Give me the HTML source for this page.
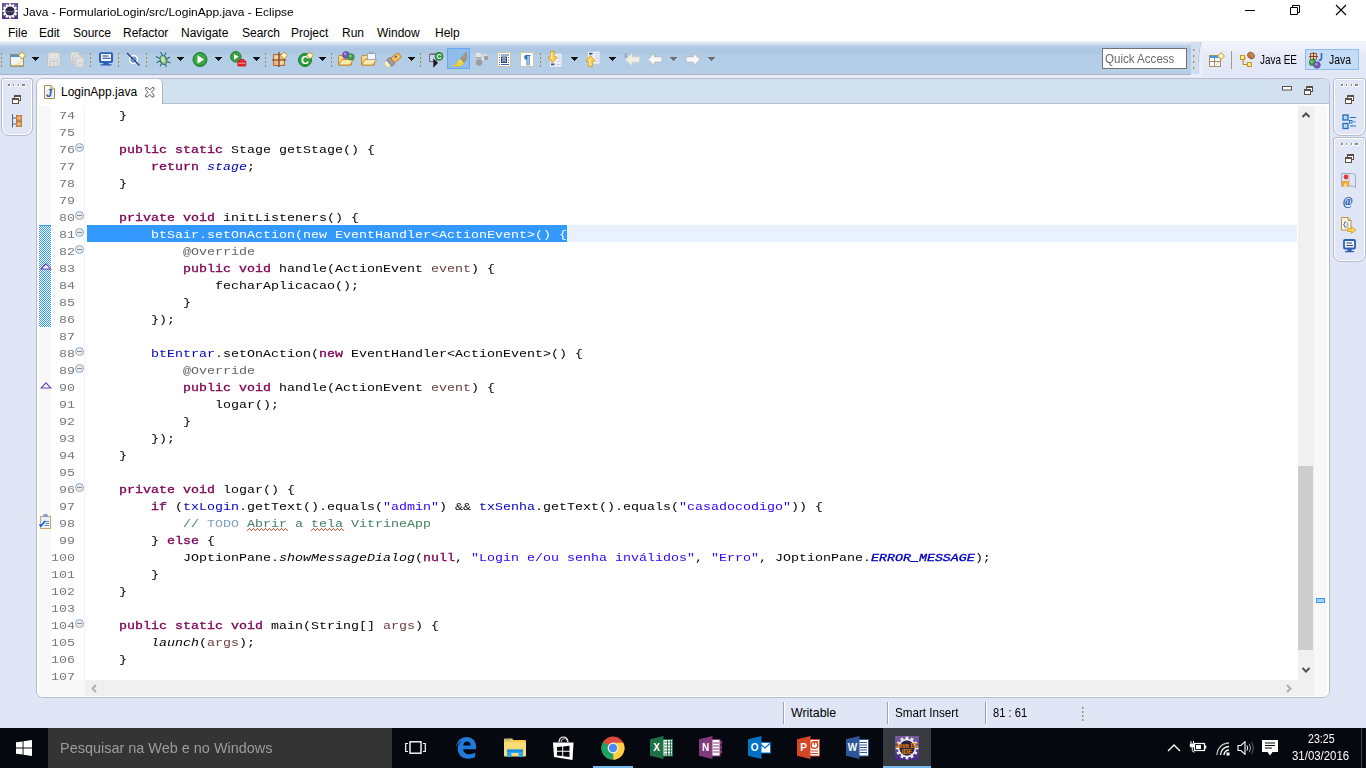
<!DOCTYPE html>
<html lang="pt-BR">
<head>
<meta charset="utf-8">
<title>Java - FormularioLogin/src/LoginApp.java - Eclipse</title>
<style>
*{box-sizing:border-box;margin:0;padding:0}
html,body{width:1366px;height:768px;overflow:hidden}
body{background:#e1e6f6;font-family:"Liberation Sans",sans-serif;font-size:12px;color:#000;position:relative}
.abs{position:absolute}
#titlebar{position:absolute;left:0;top:0;width:1366px;height:23px;background:#fff}
#titlebar .t{position:absolute;left:23px;top:5px;font-size:12px;line-height:15px;white-space:nowrap}
#menubar{position:absolute;left:0;top:23px;width:1366px;height:19px;background:#fff}
#menubar span{position:absolute;top:3px;font-size:12px;line-height:15px;white-space:nowrap}
#toolbar{position:absolute;left:0;top:42px;width:1366px;height:33px;background:linear-gradient(#e9f0f8 0,#d0e0f0 2px,#b2cbe5 5px,#adc8e3 7px,#adc8e3 12px,#b3cde7 13px,#b5cfe9 32px,#adb2c4 32px,#adb2c4 33px)}
#tbline{position:absolute;left:0;top:41px;width:1366px;height:1px;background:#f0f0f0}
#tbsub{position:absolute;left:0;top:75px;width:1366px;height:3px;background:#e9ecf9}
#persp{position:absolute;left:1195px;top:42px;width:171px;height:35px;background:linear-gradient(#f4f6fc,#e6eaf8 40%,#e1e6f6)}
#taskbar{position:absolute;left:0;top:728px;width:1366px;height:40px;background:#05080f}
#search{position:absolute;left:48px;top:0;width:344px;height:40px;background:#343434}
#search span{position:absolute;left:12px;top:0;color:#9c9c9c;font-size:15px;line-height:40px;white-space:nowrap;transform:scaleX(.963);transform-origin:0 0}

#stack{position:absolute;left:36px;top:78px;width:1294px;height:620px;border:1px solid #b6bccc;border-radius:7px;background:#fff;overflow:hidden}
#hdr{position:absolute;left:0;top:0;width:1292px;height:25px;background:#d2e1f0;border-bottom:1px solid #b9c0d2}
#tab{position:absolute;left:0;top:0;width:126px;height:26px;background:#fff;border-right:1px solid #aeb4c8;border-top-right-radius:5px}
#tab .jico{position:absolute;left:7px;top:6px}
#tab .lbl{position:absolute;left:24px;top:6px;font-size:12px;line-height:15px;white-space:nowrap}
#tab .x{position:absolute;left:108px;top:8px}
#ed{position:absolute;left:0;top:25px;width:1292px;height:593px;background:#fff}
#aruler{position:absolute;left:2px;top:2px;width:12px;height:574px;background:#f8f8f8}
#hsl{position:absolute;left:2px;top:576px;width:46px;height:16px;background:#f8f8f8}
#vline{position:absolute;left:47px;top:2px;width:1px;height:574px;background:#f3f3f3}
#code{position:absolute;left:50px;top:2px;width:1210px;height:574px;overflow:hidden;font-family:"Liberation Mono",monospace;font-size:13.333px;line-height:17px;color:#000}
#code .ln{height:17px;padding-top:1px;line-height:17px;white-space:pre}
#code .cur{background:#e8f2fe}
#code .sel{background:#3399ff;color:#fff;display:inline-block;height:17px;margin-top:-1px;padding-top:1px;vertical-align:top}
#code i,#code b{font-family:inherit}
.t{display:inline-block;transform:scaleY(.85);transform-origin:0 12px}
.k{color:#7f0055;font-weight:normal;-webkit-text-stroke:.35px #7f0055}
.f{color:#0000c0}
.fb{-webkit-text-stroke:.4px #0000c0}
.s{color:#2a00ff}
.p{color:#6a3e3e}
.an{color:#646464}
.c{color:#3f7f5f}
.td{color:#7f9fbf}
.sq{text-decoration:underline wavy #e8383d 1px;text-underline-offset:2px}
#nums{position:absolute;left:14px;top:2px;width:24px;height:574px;overflow:hidden;font-family:"Liberation Mono",monospace;font-size:13.333px;line-height:17px;color:#787878;text-align:right}
#nums div{height:17px;padding-top:1px}
.fold{position:absolute;left:38px;width:9px;height:9px;border:1px solid #9aa7b8;border-radius:50%;background:#e3ebf3}
.fold:after{content:"";position:absolute;left:1px;top:3px;width:5px;height:1px;background:#7f8fa3}
#vs{position:absolute;left:1261px;top:2px;width:16px;height:574px;background:#f0f0f0}
#thumb{position:absolute;left:0;top:360px;width:15px;height:184px;background:#cdcdcd}
#ov{position:absolute;left:1277px;top:2px;width:13px;height:590px;background:#f8f8f8}
#mk{position:absolute;left:2px;top:492px;width:9px;height:5px;border:1px solid #3399ff;background:#a9d0f5}
#hs{position:absolute;left:48px;top:576px;width:1229px;height:16px;background:#f0f0f0}

.dd{position:absolute;top:15px;fill:#111;shape-rendering:crispEdges}
.dd.g{fill:#6e6e6e}
.sep{position:absolute;top:11px;width:2px;height:15px;background:linear-gradient(90deg,#9c8a68 0,#9c8a68 1px,#cfc3a8 1px,#cfc3a8 2px) 0 0/2px 4px repeat-y;background-size:2px 4px;-webkit-mask:repeating-linear-gradient(#000 0,#000 2px,transparent 2px,transparent 4px);mask:repeating-linear-gradient(#000 0,#000 2px,transparent 2px,transparent 4px)}
.tsel{position:absolute;background:#8fbce9;border:1px solid #64a8f2}

.ptxt{position:absolute;top:11px;transform-origin:0 0;font-size:12.400px;line-height:15px;white-space:nowrap}
#qa{position:absolute;left:1102px;top:6px;width:85px;height:21px;background:#fff;border:1px solid #727272}
#qa span{position:absolute;left:2px;top:3px;color:#6a6a6a;font-size:12.300px;line-height:15px;white-space:nowrap;transform:scaleX(.94);transform-origin:0 0}

.trim{position:absolute;border:1px solid #b6bccc;border-radius:3px 3px 8px 8px;background:#e1e6f6;box-shadow:inset 0 0 0 1px #fff}
.hd{position:absolute;width:18px;height:3px;background:linear-gradient(90deg,#8f8870 0,#8f8870 2.500px,#fff 2.500px,#fff 3.500px,transparent 3.500px,transparent 5px,#8f8870 5px,#8f8870 6.500px,#fff 6.500px,#fff 7.500px,transparent 7.500px,transparent 10px,#8f8870 10px,#8f8870 11.500px,#fff 11.500px,#fff 12.500px,transparent 12.500px,transparent 14.500px,#8f8870 14.500px,#8f8870 17px,#fff 17px) 0 0/18px 2px no-repeat,linear-gradient(90deg,#fff 0,#fff 3.500px,transparent 3.500px,transparent 5px,#fff 5px,#fff 7.500px,transparent 7.500px,transparent 10px,#fff 10px,#fff 12.500px,transparent 12.500px,transparent 14.500px,#fff 14.500px) 0 2px/18px 1px no-repeat}
.ssep{position:absolute;top:702px;width:2px;height:22px;border-left:1px solid #a0a0a0;border-right:1px solid #fff}
.stx{position:absolute;top:706px;font-size:12.400px;line-height:15px;white-space:nowrap;transform-origin:0 0}

.clk{position:absolute;color:#fff;font-size:12px;line-height:14px;white-space:nowrap;transform-origin:0 0}
#rng{position:absolute;left:2px;top:121px;width:12px;height:102px;border-top:1px solid #3399ff;background:repeating-conic-gradient(#3399ff 0 25%,#fff 0 50%) 0 0/2px 2px}
</style>
</head>
<body>
<div id="titlebar"><!--TITLE-->
<svg class="abs" style="left:2px;top:3px" width="16" height="16" viewBox="0 0 16 16"><defs><linearGradient id="tg" x1="0" y1="0" x2="0" y2="1"><stop offset="0" stop-color="#6a5896"/><stop offset=".55" stop-color="#574088"/><stop offset="1" stop-color="#4c3486"/></linearGradient></defs><rect width="16" height="16" fill="url(#tg)"/><g transform="translate(8 8)" fill="#fff"><circle r="5.900"/><g transform="rotate(0)"><rect x="-1.100" y="-7.500" width="2.200" height="3"/><rect x="-1.100" y="4.500" width="2.200" height="3"/></g><g transform="rotate(30)"><rect x="-1.100" y="-7.500" width="2.200" height="3"/><rect x="-1.100" y="4.500" width="2.200" height="3"/></g><g transform="rotate(60)"><rect x="-1.100" y="-7.500" width="2.200" height="3"/><rect x="-1.100" y="4.500" width="2.200" height="3"/></g><g transform="rotate(90)"><rect x="-1.100" y="-7.500" width="2.200" height="3"/><rect x="-1.100" y="4.500" width="2.200" height="3"/></g><g transform="rotate(120)"><rect x="-1.100" y="-7.500" width="2.200" height="3"/><rect x="-1.100" y="4.500" width="2.200" height="3"/></g><g transform="rotate(150)"><rect x="-1.100" y="-7.500" width="2.200" height="3"/><rect x="-1.100" y="4.500" width="2.200" height="3"/></g></g><circle cx="8" cy="8" r="4.600" fill="#2a2440"/><path d="M3.800 8.500h8.400" stroke="#67628a" stroke-width="1.300"/><path d="M4.300 10h7.400" stroke="#48426c" stroke-width="1"/></svg>
<svg class="abs" style="left:1244px;top:4px" width="12" height="12" viewBox="0 0 12 12"><path d="M1 6.500h10" stroke="#000" stroke-width="1"/></svg>
<svg class="abs" style="left:1289px;top:4px" width="12" height="12" viewBox="0 0 12 12"><path d="M1.500 3.500h7v7h-7zM3.500 3.500v-2h7v7h-2" fill="none" stroke="#000" stroke-width="1"/></svg>
<svg class="abs" style="left:1335px;top:4px" width="12" height="12" viewBox="0 0 12 12"><path d="M1 1l10 10M11 1l-10 10" stroke="#000" stroke-width="1.100"/></svg>

<!--/TITLE--><div class="t">Java - FormularioLogin/src/LoginApp.java - Eclipse</div></div>
<div id="menubar">
<span style="left:8px">File</span><span style="left:39px">Edit</span><span style="left:73px">Source</span><span style="left:123px">Refactor</span><span style="left:181px">Navigate</span><span style="left:242px">Search</span><span style="left:291px">Project</span><span style="left:342px">Run</span><span style="left:377px">Window</span><span style="left:435px">Help</span>
</div>
<div id="tbline"></div><div id="tbsub"></div>
<div id="toolbar"><!--TOOLBAR-->
<div id="qa"><span>Quick Access</span></div>
<div class="tsel" style="left:447px;top:6px;width:23px;height:21px"></div>
<svg class="abs" style="left:10px;top:9px" width="18" height="18" viewBox="0 0 18 18"><rect x=".5" y="3.500" width="13" height="11.500" fill="#eef5fd" stroke="#a39162"/><rect x="1" y="4" width="12" height="2" fill="#3e92dc"/><path d="M3 14.500q8-.5 10-8.500" fill="none" stroke="#f3e3a8" stroke-width="1.600"/><path d="M.5 15h13" stroke="#a08a50"/><path d="M12 1.0l3.500 3.500-3.500 3.500-3.500-3.500z" fill="#f6dc8a" stroke="#cf9f2c" stroke-width="1"/><path d="M12 2.5v4M10 4.5h4" stroke="#fff" stroke-width="1.300"/></svg>
<svg class="abs" style="left:47px;top:9px" width="18" height="18" viewBox="0 0 18 18"><g transform="translate(0 1)"><path d="M.5 1.500q0-1 1-1h11q1 0 1 1v12q0 1-1 1h-11q-1 0-1-1z" fill="#dcdcdc" stroke="#c2c2c2"/><rect x="3" y="1" width="8" height="5.500" fill="#ececec" stroke="#cfcfcf" stroke-width=".6"/><path d="M4.500 2.700h5M4.500 4.300h5" stroke="#cfcfcf" stroke-width=".7"/><rect x="3.500" y="9.500" width="7" height="5" fill="#e6e6e6" stroke="#c4c4c4" stroke-width=".8"/><rect x="6.500" y="10.500" width="1.500" height="3.500" fill="#cfcfcf"/></g></svg>
<svg class="abs" style="left:70px;top:9px" width="18" height="18" viewBox="0 0 18 18"><g transform="translate(0 1)"><g transform="scale(.68)"><path d="M.5 1.500q0-1 1-1h11q1 0 1 1v12q0 1-1 1h-11q-1 0-1-1z" fill="#dcdcdc" stroke="#c2c2c2"/><rect x="3" y="1" width="8" height="5.500" fill="#ececec" stroke="#cfcfcf" stroke-width=".6"/><path d="M4.500 2.700h5M4.500 4.300h5" stroke="#cfcfcf" stroke-width=".7"/><rect x="3.500" y="9.500" width="7" height="5" fill="#e6e6e6" stroke="#c4c4c4" stroke-width=".8"/><rect x="6.500" y="10.500" width="1.500" height="3.500" fill="#cfcfcf"/></g><g transform="translate(2.500 2.500) scale(.68)"><path d="M.5 1.500q0-1 1-1h11q1 0 1 1v12q0 1-1 1h-11q-1 0-1-1z" fill="#dcdcdc" stroke="#c2c2c2"/><rect x="3" y="1" width="8" height="5.500" fill="#ececec" stroke="#cfcfcf" stroke-width=".6"/><path d="M4.500 2.700h5M4.500 4.300h5" stroke="#cfcfcf" stroke-width=".7"/><rect x="3.500" y="9.500" width="7" height="5" fill="#e6e6e6" stroke="#c4c4c4" stroke-width=".8"/><rect x="6.500" y="10.500" width="1.500" height="3.500" fill="#cfcfcf"/></g><g transform="translate(5 5.500) scale(.68)"><path d="M.5 1.500q0-1 1-1h11q1 0 1 1v12q0 1-1 1h-11q-1 0-1-1z" fill="#dcdcdc" stroke="#c2c2c2"/><rect x="3" y="1" width="8" height="5.500" fill="#ececec" stroke="#cfcfcf" stroke-width=".6"/><path d="M4.500 2.700h5M4.500 4.300h5" stroke="#cfcfcf" stroke-width=".7"/><rect x="3.500" y="9.500" width="7" height="5" fill="#e6e6e6" stroke="#c4c4c4" stroke-width=".8"/><rect x="6.500" y="10.500" width="1.500" height="3.500" fill="#cfcfcf"/></g></g></svg>
<svg class="abs" style="left:97px;top:9px" width="18" height="18" viewBox="0 0 18 18"><g transform="translate(0 .3) scale(1 .93)"><rect x="3" y="2" width="12" height="9.500" rx="1" fill="#f4f8fd" stroke="#2c5fb4" stroke-width="2"/><path d="M5.500 5h6M5.500 7.500h8" stroke="#27407e" stroke-width="1.200"/><path d="M7 12.500h4v1.500h-4zM3.500 14.700h11" stroke="#2c5fb4" stroke-width="1.400" fill="#2c5fb4"/></g></svg>
<svg class="abs" style="left:125px;top:9px" width="18" height="18" viewBox="0 0 18 18"><circle cx="8.500" cy="8.500" r="3.900" fill="#4e93cb" stroke="#fff" stroke-width="1.600"/><circle cx="8.500" cy="8.500" r="1.700" fill="#a9cde9"/><path d="M2 2l12.500 12.500" stroke="#2b2f86" stroke-width="1.200"/></svg>
<svg class="abs" style="left:155px;top:9px" width="18" height="18" viewBox="0 0 18 18"><g stroke="#2d6b6b" stroke-width="1.100" fill="none"><path d="M5.500 1l2 3.500M11 1.500l-1.500 3M1 5.500l4 2M15 6l-3.500 2M1.500 11.500l3.500-1.500M15.500 12l-3.500-1.500M5 15.500l1.500-3M11.500 16l-1.500-3.500"/></g><ellipse cx="8.500" cy="9" rx="3.300" ry="4.600" transform="rotate(-18 8.500 9)" fill="#8fc07a" stroke="#2f6f73"/><ellipse cx="8" cy="8.500" rx="1.500" ry="2.800" transform="rotate(-18 8 8.500)" fill="#cfe6bf"/></svg>
<svg class="abs" style="left:192px;top:9px" width="18" height="18" viewBox="0 0 18 18"><circle cx="8" cy="8.500" r="7" fill="#2f9a3c" stroke="#1e7a2c"/><circle cx="8" cy="8" r="5.800" fill="#4cb356" opacity=".55"/><path d="M5.500 4.200l6.500 4.300-6.500 4.300z" fill="#fff"/></svg>
<svg class="abs" style="left:230px;top:9px" width="18" height="18" viewBox="0 0 18 18"><circle cx="5.800" cy="5.800" r="5.300" fill="#3aa044" stroke="#23822f"/><path d="M4 2.900l4.600 2.900-4.600 2.900z" fill="#fff"/><rect x="7.800" y="9.800" width="8" height="5.200" rx=".8" fill="#e8262a" stroke="#c11418" stroke-width=".8"/><path d="M10 9.800v-1.300h3.500v1.300" fill="none" stroke="#d21a1e" stroke-width="1.100"/><path d="M8.200 12.200h7.200" stroke="#f6b0b0" stroke-width=".9"/></svg>
<svg class="abs" style="left:272px;top:9px" width="18" height="18" viewBox="0 0 18 18"><rect x="1.500" y="3.500" width="11" height="11" fill="#e9b882" stroke="#b5683a"/><path d="M7 1v15M0 9h14" stroke="#7a3b22" stroke-width="1.200"/><rect x="2.500" y="4.500" width="3.500" height="3.500" fill="#f3d3a8"/><rect x="8" y="10" width="3.500" height="3.500" fill="#f3d3a8"/><path d="M12 1.0l3.500 3.500-3.500 3.500-3.500-3.500z" fill="#f6dc8a" stroke="#cf9f2c" stroke-width="1"/><path d="M12 2.5v4M10 4.5h4" stroke="#fff" stroke-width="1.300"/></svg>
<svg class="abs" style="left:298px;top:9px" width="18" height="18" viewBox="0 0 18 18"><circle cx="7" cy="9" r="6.500" fill="#2f9a3c" stroke="#1f7d2d"/><text x="7" y="13" font-family="Liberation Sans,sans-serif" font-size="11" font-weight="bold" fill="#fff" text-anchor="middle">C</text><path d="M12 1.0l3.500 3.500-3.500 3.500-3.500-3.500z" fill="#f6dc8a" stroke="#cf9f2c" stroke-width="1"/><path d="M12 2.5v4M10 4.5h4" stroke="#fff" stroke-width="1.300"/></svg>
<svg class="abs" style="left:338px;top:9px" width="18" height="18" viewBox="0 0 18 18"><path d="M.5 5.500q0-1 1-1h4l1.500 1.500h6.500v8h-13z" fill="#f7d98a" stroke="#c98a2c"/><path d="M.5 14l3.500-5.500h11.500l-3.500 5.500z" fill="#fbe9b0" stroke="#c98a2c"/><circle cx="8" cy="4" r="3.500" fill="#7459b0" stroke="#5a3f98" stroke-width=".6"/><circle cx="7.200" cy="3" r="1.300" fill="#a999d6"/><circle cx="13" cy="6" r="3.300" fill="#3f9b50" stroke="#2b7c3a" stroke-width=".6"/><circle cx="12.300" cy="5" r="1.200" fill="#8fd09a"/></svg>
<svg class="abs" style="left:361px;top:9px" width="18" height="18" viewBox="0 0 18 18"><path d="M.5 5.500q0-1 1-1h4l1.500 1.500h6.500v8h-13z" fill="#f7d98a" stroke="#c98a2c"/><path d="M.5 14l3.500-5.500h11.500l-3.500 5.500z" fill="#fbe9b0" stroke="#c98a2c"/><rect x="6.500" y="2.500" width="8" height="6" fill="#f4f6fb" stroke="#9aa7c2"/><path d="M8.500 2.500v-1.500h4v1.500" fill="none" stroke="#9aa7c2"/></svg>
<svg class="abs" style="left:385px;top:9px" width="18" height="18" viewBox="0 0 18 18"><g transform="rotate(-38 8 9)"><path d="M-1 6.500l4-1v7l-4-1z" fill="#fdf6c8" stroke="#e5c255" stroke-width=".6"/><rect x="3" y="5" width="4.500" height="8" fill="#9d9aa6" stroke="#7b7080" stroke-width=".7"/><rect x="7.500" y="6" width="9" height="6" rx="1.500" fill="#f4c060" stroke="#c8791f" stroke-width=".9"/><rect x="11" y="7.500" width="2.500" height="1.200" fill="#2a4fa8"/></g></svg>
<svg class="abs" style="left:428px;top:9px" width="18" height="18" viewBox="0 0 18 18"><rect x="1.500" y="3.500" width="7" height="7" fill="#c6d6ee" stroke="#7d5f9d"/><path d="M2.500 2.500h5" stroke="#b07a8a"/><path d="M5.300 7.300l4.700 4.700-4.700 4.700z" fill="#1a1a1a"/><circle cx="11" cy="5.300" r="3.900" fill="#2f9a3c" stroke="#1f7d2d"/><text x="11" y="8" font-family="Liberation Sans,sans-serif" font-size="7" font-weight="bold" fill="#fff" text-anchor="middle">C</text></svg>
<svg class="abs" style="left:451px;top:9px" width="18" height="18" viewBox="0 0 18 18"><g transform="translate(0 -1)"><path d="M9 9.500l5.500-7.500 1 1v6l-3 4z" fill="#9e9678" stroke="#8a8468" stroke-width=".5"/><path d="M11 7l3.500-4M12 9l3-3.500" stroke="#b8b08c" stroke-width=".7"/><path d="M5 14l4-4.800 3.600 3.500-2.600 3.300h-4z" fill="#f4d43a" stroke="#e2bb1c" stroke-width=".5"/><path d="M1 15.700h6" stroke="#f0cd2a" stroke-width="1.300"/><path d="M7 11.500l2-2 2 2" fill="none" stroke="#fae98c" stroke-width=".9"/></g></svg>
<svg class="abs" style="left:474px;top:9px" width="18" height="18" viewBox="0 0 18 18"><g fill="#9d9d9d"><circle cx="4.500" cy="4.500" r="3" fill="#e4e4e4"/><rect x="2" y="6" width="5" height="1.500" fill="#a8a8a8"/><circle cx="5" cy="11.500" r="3.200"/><circle cx="11" cy="6" r="3" fill="#e0e0e0"/><circle cx="12" cy="7" r="2.300"/><path d="M8 8l2-1.500v3z" fill="#f2f2f2"/></g></svg>
<svg class="abs" style="left:497px;top:9px" width="18" height="18" viewBox="0 0 18 18"><g transform="translate(0 1)"><rect x=".5" y=".5" width="13" height="14" fill="#fdfdf8" stroke="#cfc5a5"/><path d="M2 3h1M2 12.500h1" stroke="#3c62b0" stroke-width="1"/><path d="M4 3h8M4 12.500h8" stroke="#3c62b0" stroke-width="1"/><path d="M2.500 5v6M11.500 5v6" stroke="#3c62b0" stroke-width="1" stroke-dasharray="1 1.500"/><rect x="4.500" y="5" width="5" height="5.500" fill="#dfe8f6" stroke="#27407e"/><path d="M5 7h4M5 9h4" stroke="#27407e"/></g></svg>
<svg class="abs" style="left:520px;top:9px" width="18" height="18" viewBox="0 0 18 18"><g transform="translate(0 1)"><rect x=".5" y=".5" width="13" height="14" fill="#fafcfe" stroke="#cfc5a5"/><text x="7.200" y="12" font-family="Liberation Sans,sans-serif" font-size="12.500" font-weight="bold" fill="#2f6fb6" text-anchor="middle">¶</text></g></svg>
<svg class="abs" style="left:547px;top:9px" width="18" height="18" viewBox="0 0 18 18"><rect x="2.500" y="2.500" width="12.500" height="13.500" fill="#eef2fa" stroke="#c0c8da" stroke-width=".8"/><path d="M9.500 5h4.500M9.500 7.500h4.500M9.500 10h4.500M9 13.500h5" stroke="#c0cadf" stroke-width=".9"/><rect x="4" y="12.500" width="3.500" height="1.800" fill="#2a55a8"/><path d="M3.700 .5h3.600v5.500h2.700l-4.500 5.800-4.500-5.800h2.700z" fill="#fbd560" stroke="#d69a16" stroke-width=".9"/><path d="M4.600 1.300v5.500h-1.800" fill="none" stroke="#fff3c4" stroke-width=".9"/></svg>
<svg class="abs" style="left:585px;top:9px" width="18" height="18" viewBox="0 0 18 18"><rect x="2.500" y=".3" width="12.500" height="12.700" fill="#eef2fa" stroke="#c0c8da" stroke-width=".8"/><path d="M8.500 2.500h5.500M9.500 5h4.500M10 7.500h4M10 10h4" stroke="#c0cadf" stroke-width=".9"/><rect x="4" y="1.800" width="3.500" height="1.800" fill="#2a55a8"/><path d="M3.700 15.700h3.600v-5.500h2.700l-4.500-5.800-4.500 5.800h2.700z" fill="#fbd560" stroke="#d69a16" stroke-width=".9"/><path d="M4.600 14.800v-5.500h-1.800" fill="none" stroke="#fff3c4" stroke-width=".9"/></svg>
<svg class="abs" style="left:623px;top:9px" width="18" height="18" viewBox="0 0 18 18"><path d="M1 8.500l6.500-6.500v3.800h7.500v5.400h-7.500v3.800z" transform="translate(1.500 0)" fill="#f1efe2" stroke="#d2d0c4" stroke-width=".8"/><path d="M1 2.500l3.500 4M4.500 2.500l-3.500 4M2.700 2v5" stroke="#8d9bb0" stroke-width=".7"/></svg>
<svg class="abs" style="left:647px;top:9px" width="18" height="18" viewBox="0 0 18 18"><path d="M1 8.500l6.500-6.500v3.800h7.500v5.400h-7.500v3.800z" fill="#f8f8f8" stroke="#b4b4b4" stroke-width=".9"/></svg>
<svg class="abs" style="left:685px;top:9px" width="18" height="18" viewBox="0 0 18 18"><path d="M1 8.500l6.500-6.500v3.800h7.500v5.400h-7.500v3.800z" transform="translate(16 0) scale(-1 1)" fill="#f8f8f8" stroke="#b4b4b4" stroke-width=".9"/></svg>
<svg class="dd" style="left:32px" width="7" height="4" viewBox="0 0 7 4"><path d="M0 0h7v1h-1v1h-1v1h-1v1h-1v-1h-1v-1h-1v-1h-1z"/></svg>
<svg class="dd" style="left:177px" width="7" height="4" viewBox="0 0 7 4"><path d="M0 0h7v1h-1v1h-1v1h-1v1h-1v-1h-1v-1h-1v-1h-1z"/></svg>
<svg class="dd" style="left:215px" width="7" height="4" viewBox="0 0 7 4"><path d="M0 0h7v1h-1v1h-1v1h-1v1h-1v-1h-1v-1h-1v-1h-1z"/></svg>
<svg class="dd" style="left:253px" width="7" height="4" viewBox="0 0 7 4"><path d="M0 0h7v1h-1v1h-1v1h-1v1h-1v-1h-1v-1h-1v-1h-1z"/></svg>
<svg class="dd" style="left:319px" width="7" height="4" viewBox="0 0 7 4"><path d="M0 0h7v1h-1v1h-1v1h-1v1h-1v-1h-1v-1h-1v-1h-1z"/></svg>
<svg class="dd" style="left:408px" width="7" height="4" viewBox="0 0 7 4"><path d="M0 0h7v1h-1v1h-1v1h-1v1h-1v-1h-1v-1h-1v-1h-1z"/></svg>
<svg class="dd" style="left:571px" width="7" height="4" viewBox="0 0 7 4"><path d="M0 0h7v1h-1v1h-1v1h-1v1h-1v-1h-1v-1h-1v-1h-1z"/></svg>
<svg class="dd" style="left:609px" width="7" height="4" viewBox="0 0 7 4"><path d="M0 0h7v1h-1v1h-1v1h-1v1h-1v-1h-1v-1h-1v-1h-1z"/></svg>
<svg class="dd g" style="left:670px" width="7" height="4" viewBox="0 0 7 4"><path d="M0 0h7v1h-1v1h-1v1h-1v1h-1v-1h-1v-1h-1v-1h-1z"/></svg>
<svg class="dd g" style="left:708px" width="7" height="4" viewBox="0 0 7 4"><path d="M0 0h7v1h-1v1h-1v1h-1v1h-1v-1h-1v-1h-1v-1h-1z"/></svg>
<i class="sep" style="left:1px"></i>
<i class="sep" style="left:90px"></i>
<i class="sep" style="left:118px"></i>
<i class="sep" style="left:146px"></i>
<i class="sep" style="left:265px"></i>
<i class="sep" style="left:331px"></i>
<i class="sep" style="left:420px"></i>
<i class="sep" style="left:540px"></i>
<!--/TOOLBAR--></div>
<div id="persp"><!--PERSP-->
<svg class="abs" style="left:-4px;top:0" width="12" height="35" viewBox="0 0 12 35"><path d="M0 0h12v35h-12z" fill="#e9edf9"/><path d="M0 0h1v32h-1z" fill="#c6d9ee"/><path d="M9.500 0q-2.500 14-2.500 32" fill="none" stroke="#b3c3dc" stroke-width="1"/><path d="M8.500 0q-2.500 14-2.500 32l-6 0v-32z" fill="#cfdff0"/></svg>
<i class="sep" style="left:-2px;top:7px;height:22px;background-size:2px 6px;-webkit-mask:repeating-linear-gradient(#000 0,#000 2px,transparent 2px,transparent 6px);mask:repeating-linear-gradient(#000 0,#000 2px,transparent 2px,transparent 6px)"></i>
<svg class="abs" style="left:14px;top:10px" width="17" height="17" viewBox="0 0 17 17"><rect x=".5" y="3.500" width="11" height="11" fill="#f4f7fc" stroke="#a39162"/><rect x="1" y="4" width="10" height="2" fill="#4a98dd"/><path d="M1 9.500h10M5.500 6v8" stroke="#a39162"/><path d="M7 13l3-3" stroke="#e8d28a"/><path d="M12 .5l3.500 3.500-3.500 3.500-3.500-3.500z" fill="#f6dc8a" stroke="#cf9f2c"/><path d="M12 2v4M10 4h4" stroke="#fff" stroke-width="1.300"/></svg>
<div class="abs" style="left:36px;top:9px;width:1px;height:18px;background:#9a9a9a"></div>
<svg class="abs" style="left:45px;top:9px" width="17" height="17" viewBox="0 0 17 17"><path d="M3 7.500v6h6.500M3 7h3" stroke="#b8860b" fill="none"/><rect x=".5" y="4.500" width="4" height="4" fill="#fde79a" stroke="#c99a1a"/><rect x="7.500" y="11.500" width="4" height="4" fill="#fde79a" stroke="#c99a1a"/><ellipse cx="11" cy="4.500" rx="3.700" ry="3" transform="rotate(35 11 4.500)" fill="#b4723a" stroke="#8a4f22" stroke-width=".7"/><path d="M8.500 3l5 3.200M9.500 1.800l4.600 3" stroke="#e0a070" stroke-width=".7"/></svg>
<span class="ptxt" style="left:65px;transform:scaleX(.8)">Java EE</span>
<div class="abs" style="left:110px;top:7px;width:54px;height:21px;background:#c4dcf6;border:1px solid #8fbdf0"></div>
<svg class="abs" style="left:113px;top:10px" width="17" height="17" viewBox="0 0 17 17"><rect x="2.500" y="1.500" width="6" height="6" fill="#f0c9a0" stroke="#8a4a2a" stroke-width=".8"/><path d="M5.500 0v8.500M1 4.500h9" stroke="#7a3b22" stroke-width=".9"/><path d="M13.500 1v5q0 2.500-3 2.500" fill="none" stroke="#3a62b4" stroke-width="1.600"/><circle cx="4.500" cy="10.500" r="3.300" fill="#3f9b50" stroke="#2b7c3a" stroke-width=".6"/><circle cx="3.800" cy="9.600" r="1.200" fill="#8fd09a"/><circle cx="9" cy="13" r="3.300" fill="#7459b0" stroke="#5a3f98" stroke-width=".6"/><circle cx="8.300" cy="12.200" r="1.200" fill="#a999d6"/></svg>
<span class="ptxt" style="left:134px;transform:scaleX(.84)">Java</span>

<!--/PERSP--></div>
<!--TRIMS-->
<div class="trim" style="left:1px;top:78px;width:32px;height:58px">
<i class="hd" style="left:6px;top:5px"></i>
<svg class="abs" style="left:10px;top:16px" width="10" height="10" viewBox="0 0 10 10"><rect x="2.500" y=".500" width="6" height="5" fill="#fff" stroke="#5b5047"/><path d="M2.500 1.500h6" stroke="#5b5047"/><rect x=".500" y="3.500" width="6" height="5" fill="#fff" stroke="#5b5047"/><path d="M.500 4.500h6" stroke="#5b5047"/></svg>
<svg class="abs" style="left:10px;top:35px" width="11" height="14" viewBox="0 0 11 14"><path d="M.5 0v13.500M.5 4h4M.5 10h4" stroke="#5a6478" stroke-width="1" fill="none"/><rect x="4.500" y="1.500" width="5" height="5" fill="#d98c3a" stroke="#b5682a" stroke-width=".8"/><rect x="4.500" y="7.500" width="5" height="5" fill="#d98c3a" stroke="#b5682a" stroke-width=".8"/><path d="M7 1.500v5M4.500 4h5M7 7.500v5M4.500 10h5" stroke="#f6d9b0" stroke-width=".7"/></svg>
</div>
<div class="trim" style="left:1333px;top:78px;width:33px;height:58px">
<i class="hd" style="left:7px;top:5px"></i>
<svg class="abs" style="left:11px;top:16px" width="10" height="10" viewBox="0 0 10 10"><rect x="2.500" y=".500" width="6" height="5" fill="#fff" stroke="#5b5047"/><path d="M2.500 1.500h6" stroke="#5b5047"/><rect x=".500" y="3.500" width="6" height="5" fill="#fff" stroke="#5b5047"/><path d="M.500 4.500h6" stroke="#5b5047"/></svg>
<svg class="abs" style="left:8px;top:35px" width="15" height="16" viewBox="0 0 15 16"><rect x="1" y="1" width="5" height="5" fill="#bcd8f4" stroke="#1f6fbd" stroke-width="1.300"/><rect x="1" y="9.500" width="5" height="5" fill="#bcd8f4" stroke="#1f6fbd" stroke-width="1.300"/><path d="M8 3.500h6M8 12h6M11.500 7.800h2" stroke="#1f6fbd" stroke-width="1.100"/><rect x="7.500" y="6.500" width="2.500" height="2.500" fill="#fff" stroke="#1f6fbd"/></svg>
</div>
<div class="trim" style="left:1333px;top:137px;width:33px;height:125px">
<i class="hd" style="left:7px;top:5px"></i>
<svg class="abs" style="left:11px;top:16px" width="10" height="10" viewBox="0 0 10 10"><rect x="2.500" y=".500" width="6" height="5" fill="#fff" stroke="#5b5047"/><path d="M2.500 1.500h6" stroke="#5b5047"/><rect x=".500" y="3.500" width="6" height="5" fill="#fff" stroke="#5b5047"/><path d="M.500 4.500h6" stroke="#5b5047"/></svg>
<svg class="abs" style="left:7px;top:34px" width="16" height="17" viewBox="0 0 16 17"><path d="M.5 1.500h11l3 1.500v12.500l-3-1.500h-11z" fill="#dfe6f2" stroke="#8f9db8" stroke-width=".8"/><path d="M8 1.500v13" stroke="#b0bbd0" stroke-width=".8"/><circle cx="5" cy="5" r="2.400" fill="#e23a3a"/><rect x="1" y="9" width="7" height="5.500" fill="#f5a33a"/><path d="M3 14.500v-2.500q1.500-2 3 0v2.500z" fill="#fbe08a"/></svg>
<span class="abs" style="left:9px;top:57px;font:italic bold 11.500px/13px &quot;Liberation Serif&quot;,serif;color:#2a63b8">@</span>
<svg class="abs" style="left:7px;top:79px" width="16" height="17" viewBox="0 0 16 17"><path d="M.5.500h6.500l3 3v9.500h-9.500z" fill="#fdf8e6" stroke="#b5893a" stroke-width=".9"/><path d="M7 .500v3h3" fill="none" stroke="#b5893a" stroke-width=".9"/><path d="M5 4.500q-1.500 0-1.500 1.500t-1 1.500q1 0 1 1.500t1.500 1.500" fill="none" stroke="#3c5a9a" stroke-width=".9"/><path d="M5.500 6h2M5.500 8h2M5.500 10h2" stroke="#3c5a9a" stroke-width=".8"/><path d="M6.500 11.500h4v-2l4.500 3.500-4.500 3.500v-2h-4z" fill="#fbd560" stroke="#d69a16" stroke-width=".8"/></svg>
<svg class="abs" style="left:9px;top:101px" width="14" height="14" viewBox="0 0 14 14"><rect x="1" y="1" width="11" height="8.500" rx="1" fill="#f4f8fd" stroke="#2c5fb4" stroke-width="1.800"/><path d="M3.500 4h5.500M3.500 6.500h6.500" stroke="#27407e" stroke-width="1.100"/><path d="M5 10.500h3v1.500h-3zM2 12.700h9" stroke="#2c5fb4" stroke-width="1.300" fill="#2c5fb4"/></svg>
</div>
<!--/TRIMS-->
<!--EDITOR--><div id="stack">
<div id="hdr"></div>
<div id="tab"><svg class="jico" width="11" height="14" viewBox="0 0 11 14"><path d="M.5.5h6.500l3.500 3.500v9.500h-10z" fill="#fff" stroke="#a38a4c"/><path d="M7 .5v3.500h3.500" fill="#f5ecd0" stroke="#a38a4c"/><rect x="1.500" y="4.500" width="8" height="8" fill="#e4ecf8"/><text x="5" y="11.500" font-family="Liberation Sans,sans-serif" font-size="10.500" font-weight="bold" font-style="italic" fill="#2b5a9c" text-anchor="middle">J</text></svg><span class="lbl">LoginApp.java</span><svg class="x" width="10.500" height="10.500" viewBox="0 0 11 11"><path d="M.7.700h2l2.300 2.500 2.300-2.500h2v2l-2.500 2.800 2.500 2.800v2h-2l-2.300-2.500-2.300 2.500h-2v-2l2.500-2.800-2.500-2.800z" fill="#fff" stroke="#555" stroke-width="1"/></svg></div>
<div id="ed">
<div id="aruler"></div>
<div id="vline"></div>
<div id="code">
<div class="ln"><span class="t">    }</span></div>
<div class="ln"><span class="t"></span></div>
<div class="ln"><span class="t">    <b class="k">public</b> <b class="k">static</b> Stage getStage() {</span></div>
<div class="ln"><span class="t">        <b class="k">return</b> <i class="f">stage</i>;</span></div>
<div class="ln"><span class="t">    }</span></div>
<div class="ln"><span class="t"></span></div>
<div class="ln"><span class="t">    <b class="k">private</b> <b class="k">void</b> initListeners() {</span></div>
<div class="ln cur"><span class="sel"><span class="t">        btSair.setOnAction(new EventHandler&lt;ActionEvent&gt;() {</span></span></div>
<div class="ln"><span class="t">            <span class="an">@Override</span></span></div>
<div class="ln"><span class="t">            <b class="k">public</b> <b class="k">void</b> handle(ActionEvent <span class="p">event</span>) {</span></div>
<div class="ln"><span class="t">                fecharAplicacao();</span></div>
<div class="ln"><span class="t">            }</span></div>
<div class="ln"><span class="t">        });</span></div>
<div class="ln"><span class="t"></span></div>
<div class="ln"><span class="t">        <span class="f">btEntrar</span>.setOnAction(<b class="k">new</b> EventHandler&lt;ActionEvent&gt;() {</span></div>
<div class="ln"><span class="t">            <span class="an">@Override</span></span></div>
<div class="ln"><span class="t">            <b class="k">public</b> <b class="k">void</b> handle(ActionEvent <span class="p">event</span>) {</span></div>
<div class="ln"><span class="t">                logar();</span></div>
<div class="ln"><span class="t">            }</span></div>
<div class="ln"><span class="t">        });</span></div>
<div class="ln"><span class="t">    }</span></div>
<div class="ln"><span class="t"></span></div>
<div class="ln"><span class="t">    <b class="k">private</b> <b class="k">void</b> logar() {</span></div>
<div class="ln"><span class="t">        <b class="k">if</b> (<span class="f">txLogin</span>.getText().equals(<span class="s">&quot;admin&quot;</span>) &amp;&amp; <span class="f">txSenha</span>.getText().equals(<span class="s">&quot;casadocodigo&quot;</span>)) {</span></div>
<div class="ln"><span class="t">            <span class="c">// <span class="td">TODO</span> Abrir a tela VitrineApp</span></span></div>
<div class="ln"><span class="t">        } <b class="k">else</b> {</span></div>
<div class="ln"><span class="t">            JOptionPane.<i>showMessageDialog</i>(<b class="k">null</b>, <span class="s">&quot;Login e/ou senha inválidos&quot;</span>, <span class="s">&quot;Erro&quot;</span>, JOptionPane.<i class="f fb">ERROR_MESSAGE</i>);</span></div>
<div class="ln"><span class="t">        }</span></div>
<div class="ln"><span class="t">    }</span></div>
<div class="ln"><span class="t"></span></div>
<div class="ln"><span class="t">    <b class="k">public</b> <b class="k">static</b> <b class="k">void</b> main(String[] <span class="p">args</span>) {</span></div>
<div class="ln"><span class="t">        <i>launch</i>(<span class="p">args</span>);</span></div>
<div class="ln"><span class="t">    }</span></div>
<div class="ln"><span class="t"></span></div>
</div>
<div id="nums">
<div><span class="t">74</span></div>
<div><span class="t">75</span></div>
<div><span class="t">76</span></div>
<div><span class="t">77</span></div>
<div><span class="t">78</span></div>
<div><span class="t">79</span></div>
<div><span class="t">80</span></div>
<div><span class="t">81</span></div>
<div><span class="t">82</span></div>
<div><span class="t">83</span></div>
<div><span class="t">84</span></div>
<div><span class="t">85</span></div>
<div><span class="t">86</span></div>
<div><span class="t">87</span></div>
<div><span class="t">88</span></div>
<div><span class="t">89</span></div>
<div><span class="t">90</span></div>
<div><span class="t">91</span></div>
<div><span class="t">92</span></div>
<div><span class="t">93</span></div>
<div><span class="t">94</span></div>
<div><span class="t">95</span></div>
<div><span class="t">96</span></div>
<div><span class="t">97</span></div>
<div><span class="t">98</span></div>
<div><span class="t">99</span></div>
<div><span class="t">100</span></div>
<div><span class="t">101</span></div>
<div><span class="t">102</span></div>
<div><span class="t">103</span></div>
<div><span class="t">104</span></div>
<div><span class="t">105</span></div>
<div><span class="t">106</span></div>
<div><span class="t">107</span></div>
</div>
<i class="fold" style="top:39px"></i>
<i class="fold" style="top:107px"></i>
<i class="fold" style="top:124px"></i>
<i class="fold" style="top:141px"></i>
<i class="fold" style="top:243px"></i>
<i class="fold" style="top:260px"></i>
<i class="fold" style="top:379px"></i>
<i class="fold" style="top:515px"></i>
<div id="vs"><div id="thumb"></div></div>
<div id="ov"><div id="mk"></div></div>
<div id="hsl"></div><div id="hs"></div>
<svg class="abs" style="left:210px;top:424px" width="41" height="3" viewBox="0 0 41 3" shape-rendering="crispEdges"><defs><pattern id="zz" width="4" height="3" patternUnits="userSpaceOnUse"><path d="M0 2h1v1h-1zM1 1h1v1h-1zM2 0h1v1h-1zM3 1h1v1h-1z" fill="#f0522a"/></pattern></defs><rect width="41" height="3" fill="url(#zz)"/></svg>
<svg class="abs" style="left:274px;top:424px" width="33" height="3" viewBox="0 0 33 3" shape-rendering="crispEdges"><rect width="33" height="3" fill="url(#zz)"/></svg>
<div id="rng"></div>
<svg class="abs" style="left:3px;top:159px" width="12" height="7" viewBox="0 0 12 7"><path d="M6 .8l4.700 5.200h-9.400z" fill="#fff" stroke="#6a35b0" stroke-width="1.100"/></svg>
<svg class="abs" style="left:3px;top:278px" width="12" height="7" viewBox="0 0 12 7"><path d="M6 .8l4.700 5.200h-9.400z" fill="#fff" stroke="#6a35b0" stroke-width="1.100"/></svg>
<svg class="abs" style="left:2px;top:410px" width="13" height="15" viewBox="0 0 13 15"><rect x="1.500" y="2.500" width="10" height="12" fill="#eef2f8" stroke="#c9a868" stroke-width="1"/><path d="M4 3v-1.500l1-1.500h3l1 1.500v1.500z" fill="#8e9dbc"/><path d="M6 7.500h4M6.500 9.500h3.500M5.500 11.500h4.500" stroke="#5a78b8" stroke-width=".9"/><path d="M.5 10.500l1.500 1.500 4-5" fill="none" stroke="#0a5cf5" stroke-width="1.700"/></svg>
<svg class="abs" style="left:1263px;top:7px" width="12" height="8" viewBox="0 0 12 8"><path d="M2.500 6l3.500-3.500 3.500 3.500" fill="none" stroke="#505050" stroke-width="2"/></svg>
<svg class="abs" style="left:1263px;top:562px" width="12" height="8" viewBox="0 0 12 8"><path d="M2.500 2l3.500 3.500 3.500-3.500" fill="none" stroke="#505050" stroke-width="2"/></svg>
<svg class="abs" style="left:53px;top:579px" width="8" height="11" viewBox="0 0 8 11"><path d="M6 2l-3.500 3.500 3.500 3.500" fill="none" stroke="#b0b0b0" stroke-width="2"/></svg>
<svg class="abs" style="left:1248px;top:579px" width="8" height="11" viewBox="0 0 8 11"><path d="M2 2l3.500 3.500-3.500 3.500" fill="none" stroke="#b0b0b0" stroke-width="2"/></svg>
</div>
<svg class="abs" style="left:1245px;top:7px" width="11" height="6" viewBox="0 0 11 6"><rect x=".5" y=".5" width="9" height="3.500" fill="#fff" stroke="#5b5047"/></svg>
<svg class="abs" style="left:1267px;top:7px" width="10" height="10" viewBox="0 0 10 10"><rect x="2.500" y=".500" width="6" height="5" fill="#fff" stroke="#5b5047"/><path d="M2.500 1.500h6" stroke="#5b5047"/><rect x=".500" y="3.500" width="6" height="5" fill="#fff" stroke="#5b5047"/><path d="M.500 4.500h6" stroke="#5b5047"/></svg>
</div>
<!--/EDITOR-->
<!--STATUS-->
<i class="ssep" style="left:783px"></i>
<i class="ssep" style="left:887px"></i>
<i class="ssep" style="left:985px"></i>
<span class="stx" style="left:791px">Writable</span>
<span class="stx" style="left:895px;transform:scaleX(.94)">Smart Insert</span>
<span class="stx" style="left:993px;transform:scaleX(.9)">81 : 61</span>
<i class="sep" style="left:1082px;top:707px;height:15px"></i>
<!--/STATUS-->
<div id="taskbar">
<div id="search"><span>Pesquisar na Web e no Windows</span></div>
<!--TASKICONS-->
<svg class="abs" style="left:16px;top:12px" width="16" height="16" viewBox="0 0 16 16"><path d="M0 2.300l6.600-.9v6.100h-6.600zM7.500 1.250l8.500-1.250v7.500h-8.500zM0 8.500h6.600v6.100l-6.600-.9zM7.500 8.500h8.500v7.500l-8.500-1.250z" fill="#fff"/></svg>
<svg class="abs" style="left:405px;top:13px" width="21" height="13" viewBox="0 0 21 13"><rect x="5" y=".8" width="11" height="11.400" fill="none" stroke="#fff" stroke-width="1.400"/><path d="M3 2.500h-2.300v8h2.300M18 2.500h2.300v8h-2.300" fill="none" stroke="#fff" stroke-width="1.200"/></svg>
<svg class="abs" style="left:455px;top:8px" width="22" height="23" viewBox="0 0 22 23"><path d="M1.200 11.200C1.800 4.500 6.500 1 11.500 1c6 0 9.600 4.200 9.600 10v2.300H8.200c.2 3.200 2.700 5 6 5 2.300 0 4.300-.6 6-1.700v4.500c-1.800 1-4.200 1.600-6.900 1.600-6.300 0-10.600-4-10.600-10 0-3.300 1.600-6.200 4.300-7.900C4.300 6 2.300 8 1.200 11.200zM8.300 9.500h7.300c0-2.400-1.300-4-3.500-4-2.100 0-3.500 1.600-3.800 4z" fill="#1f7ad9"/></svg>
<svg class="abs" style="left:504px;top:10px" width="22" height="20" viewBox="0 0 22 20"><path d="M0 1.500q0-1 1-1h7l1.500 1.500h11.500q1 0 1 1v15h-22z" fill="#f5c84c"/><rect x="0" y="4" width="22" height="14.500" rx=".8" fill="#fbdc7a"/><path d="M1.500 1.600h4" stroke="#5fb0e8" stroke-width="1.200"/><path d="M3 19v-7.500h16v7.500h-4.500v-4h-7v4z" fill="#2aa8f2"/><path d="M3 11.500h16v2.500h-16z" fill="#1d8fe0"/></svg>
<svg class="abs" style="left:552px;top:8px" width="22" height="24" viewBox="0 0 22 24"><path d="M7 6q.5-5 4.500-5t4.500 5" fill="none" stroke="#fff" stroke-width="1.200"/><path d="M9 6q.5-3.500 3.500-3.500t3 3.500" fill="none" stroke="#ddd" stroke-width=".9"/><path d="M1 6.500h20.500l-1 17.500-18.500-3z" fill="#fff"/><path d="M5 11l5.200-.5v4.300h-5.200zM11.200 10.400l6.300-.7v5.100h-6.300zM5 15.800h5.200v4.300l-5.200-.6zM11.200 15.800h6.300v5.200l-6.300-.8z" fill="#05080f"/></svg>
<svg class="abs" style="left:601px;top:8px" width="24" height="24" viewBox="0 0 24 24"><circle cx="12" cy="12" r="11.500" fill="#dd4b3e"/><path d="M12 12L2.040 6.250A11.500 11.500 0 0 0 7 22.400z" fill="#1da261"/><path d="M12 12L2.040 6.250A11.500 11.500 0 0 0 12.500 23.490L17.500 15z" fill="#1da261"/><path d="M12 12h11.400A11.500 11.500 0 0 1 12.400 23.500z" fill="#ffce43"/><path d="M12 6.800h10.260A11.500 11.500 0 0 1 12.400 23.500l4.800-8.300z" fill="#ffce43"/><circle cx="12" cy="12" r="5.400" fill="#f1f1f1"/><circle cx="12" cy="12" r="4.200" fill="#4a8af4"/></svg>
<div class="abs" style="left:593px;top:38px;width:40px;height:2px;background:#76b9ed"></div>
<svg class="abs" style="left:650px;top:8px" width="24" height="24" viewBox="0 0 24 24"><rect x="11" y="3.500" width="11.500" height="16.500" fill="#fff" stroke="#1e7145" stroke-width="1"/><path d="M14 6h8M14 9h8M14 12h8M14 15h8M14 18h8M17.500 4v16M20.500 4v16" stroke="#1e7145" stroke-width=".9"/><path d="M0 3.200l13.500-3.200v23l-13.500-3.200z" fill="#1e7145"/><text x="6.600" y="15.300" font-family="Liberation Sans,sans-serif" font-size="10" font-weight="bold" fill="#fff" text-anchor="middle">X</text></svg>
<svg class="abs" style="left:699px;top:8px" width="24" height="24" viewBox="0 0 24 24"><rect x="11" y="3.500" width="10" height="16.500" fill="#fff" stroke="#80397b" stroke-width="1"/><path d="M21 5h2v3.500h-2zM21 9.500h2v3.500h-2zM21 14h2v3.500h-2z" fill="#80397b"/><path d="M14 7h6M14 10h6M14 13h6M14 16h6" stroke="#80397b" stroke-width="1"/><path d="M0 3.200l13.500-3.200v23l-13.500-3.200z" fill="#80397b"/><text x="6.600" y="15.300" font-family="Liberation Sans,sans-serif" font-size="10" font-weight="bold" fill="#fff" text-anchor="middle">N</text></svg>
<svg class="abs" style="left:748px;top:8px" width="24" height="24" viewBox="0 0 24 24"><rect x="11" y="6.500" width="11.500" height="10.500" fill="#fff" stroke="#0072c6" stroke-width="1"/><path d="M11 7l6 5 5.500-5" fill="none" stroke="#0072c6" stroke-width="1.300"/><path d="M0 3.200l13.500-3.200v23l-13.500-3.200z" fill="#0072c6"/><text x="6.600" y="15.300" font-family="Liberation Sans,sans-serif" font-size="10" font-weight="bold" fill="#fff" text-anchor="middle">O</text></svg>
<svg class="abs" style="left:797px;top:8px" width="24" height="24" viewBox="0 0 24 24"><rect x="11" y="3.500" width="11.500" height="16.500" fill="#fff" stroke="#d24726" stroke-width="1"/><circle cx="17.500" cy="9" r="3.300" fill="none" stroke="#d24726" stroke-width="1.400"/><path d="M17.500 9v-3.500h3.500" fill="none" stroke="#d24726" stroke-width="1.200"/><path d="M14 15h7M14 17.500h7" stroke="#d24726" stroke-width="1"/><path d="M0 3.200l13.500-3.200v23l-13.500-3.200z" fill="#d24726"/><text x="6.600" y="15.300" font-family="Liberation Sans,sans-serif" font-size="10" font-weight="bold" fill="#fff" text-anchor="middle">P</text></svg>
<svg class="abs" style="left:846px;top:8px" width="24" height="24" viewBox="0 0 24 24"><rect x="11" y="3.500" width="11.500" height="16.500" fill="#fff" stroke="#2b579a" stroke-width="1"/><path d="M14 6.500h7M14 9h7M14 11.500h7M14 14h7M14 16.500h7" stroke="#2b579a" stroke-width="1"/><path d="M0 3.200l13.500-3.200v23l-13.500-3.200z" fill="#2b579a"/><text x="6.600" y="15.300" font-family="Liberation Sans,sans-serif" font-size="10" font-weight="bold" fill="#fff" text-anchor="middle">W</text></svg>
<div class="abs" style="left:883px;top:0;width:48px;height:40px;background:#373b3f"></div>
<div class="abs" style="left:883px;top:38px;width:48px;height:2px;background:#76b9ed"></div>
<svg class="abs" style="left:895px;top:8px" width="24" height="24" viewBox="0 0 24 24"><defs><linearGradient id="pg" x1="0" y1="0" x2="0" y2="1"><stop offset="0" stop-color="#7b5f9c"/><stop offset=".5" stop-color="#5e4690"/><stop offset="1" stop-color="#46268a"/></linearGradient></defs><rect width="24" height="24" rx="1.200" fill="url(#pg)"/><g transform="translate(12 12)"><circle r="8.300" fill="none" stroke="#ececec" stroke-width="1.700"/><g fill="#ececec"><g transform="rotate(0)"><rect x="-1.400" y="-11.300" width="2.800" height="2.600"/><rect x="-1.400" y="8.700" width="2.800" height="2.600"/></g><g transform="rotate(30)"><rect x="-1.400" y="-11.300" width="2.800" height="2.600"/><rect x="-1.400" y="8.700" width="2.800" height="2.600"/></g><g transform="rotate(60)"><rect x="-1.400" y="-11.300" width="2.800" height="2.600"/><rect x="-1.400" y="8.700" width="2.800" height="2.600"/></g><g transform="rotate(90)"><rect x="-1.400" y="-11.300" width="2.800" height="2.600"/><rect x="-1.400" y="8.700" width="2.800" height="2.600"/></g><g transform="rotate(120)"><rect x="-1.400" y="-11.300" width="2.800" height="2.600"/><rect x="-1.400" y="8.700" width="2.800" height="2.600"/></g><g transform="rotate(150)"><rect x="-1.400" y="-11.300" width="2.800" height="2.600"/><rect x="-1.400" y="8.700" width="2.800" height="2.600"/></g></g><circle r="7.500" fill="#2b2440"/></g><text x="12" y="11.700" font-family="Liberation Sans,sans-serif" font-size="6.600" font-weight="bold" fill="#f28c14" stroke="#8a4300" stroke-width=".2" text-anchor="middle" textLength="23" lengthAdjust="spacingAndGlyphs">Java EE</text><text x="12" y="17.800" font-family="Liberation Sans,sans-serif" font-size="6.800" font-weight="bold" fill="#f28c14" stroke="#8a4300" stroke-width=".2" text-anchor="middle" textLength="10.500" lengthAdjust="spacingAndGlyphs">IDE</text></svg>
<svg class="abs" style="left:1167px;top:15px" width="14" height="10" viewBox="0 0 14 10"><path d="M1 8l6-6 6 6" fill="none" stroke="#fff" stroke-width="1.400"/></svg>
<svg class="abs" style="left:1189px;top:13px" width="18" height="12" viewBox="0 0 18 12"><rect x="5.500" y="2.500" width="10" height="7" fill="none" stroke="#fff" stroke-width="1.200"/><rect x="7" y="4" width="5" height="4" fill="#fff"/><path d="M16 4.500h1.300v3h-1.300z" fill="#fff"/><path d="M2 0v2.500M4.500 0v2.500" stroke="#fff" stroke-width="1"/><path d="M.8 2.500h5v2.500q0 1.500-2.500 1.500t-2.500-1.500z" fill="#fff"/><path d="M3.300 6.500v3q0 1.500 2.200 1.500" fill="none" stroke="#fff" stroke-width="1"/></svg>
<svg class="abs" style="left:1216px;top:14px" width="14" height="14" viewBox="0 0 14 14"><g fill="none" stroke="#fff"><path d="M1 13A12 12 0 0 1 13 1" stroke-width="1.300" opacity=".75"/><path d="M4.500 13A8.500 8.500 0 0 1 13 4.500" stroke-width="1.300"/><path d="M8 13A5 5 0 0 1 13 8" stroke-width="1.400"/></g><rect x="10.500" y="10.500" width="3" height="3" fill="#fff"/></svg>
<svg class="abs" style="left:1237px;top:13px" width="17" height="14" viewBox="0 0 17 14"><path d="M1 4.500h3l4-3.800v12.600l-4-3.800h-3z" fill="none" stroke="#fff" stroke-width="1.100"/><path d="M10 4.500q1.500 2.500 0 5" fill="none" stroke="#fff" stroke-width="1"/><path d="M12.300 2.800q2.600 4.200 0 8.400" fill="none" stroke="#fff" stroke-width="1" opacity=".65"/><path d="M14.500 1q3.500 6 0 12" fill="none" stroke="#fff" stroke-width="1" opacity=".35"/></svg>
<svg class="abs" style="left:1262px;top:12px" width="16" height="16" viewBox="0 0 16 16"><path d="M0 0h16v12h-5.500l-2.500 3.500-2.500-3.500h-5.500z" fill="#fff"/><path d="M3 3h10M3 5.500h10M3 8h7" stroke="#05080f" stroke-width="1"/></svg>
<span class="clk" style="left:1308px;top:4px;transform:scaleX(.885)">23:25</span>
<span class="clk" style="left:1292px;top:20.500px;transform:scaleX(.952)">31/03/2016</span>
<div class="abs" style="left:1361px;top:0;width:1px;height:40px;background:#3c3f45"></div>
<!--/TASKICONS-->
</div>
</body>
</html>
